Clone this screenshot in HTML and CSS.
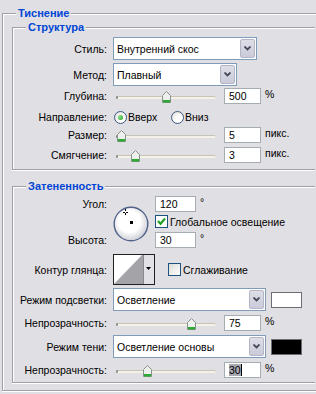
FILE: index.html
```html
<!DOCTYPE html>
<html lang="ru">
<head>
    <meta charset="UTF-8">
    <meta name="viewport" content="width=device-width, initial-scale=1.0">
    <title>Тиснение</title>
    <link rel="stylesheet" href="styles.css">
</head>
<body>
    <div class="group outer">
        <div class="group-title">Тиснение</div>

        <!-- Структура -->
        <div class="group inner structure">
            <div class="group-title">Структура</div>

            <div class="row r-style">
                <label>Стиль:</label>
                <div class="select w-style">
                    <span>Внутренний скос</span>
                    <span class="select-btn"><svg width="7" height="5" viewBox="0 0 7 5"><polyline points="0.5,0.5 3.5,3.5 6.5,0.5" fill="none" stroke="#45475a" stroke-width="1.8"/></svg></span>
                </div>
            </div>

            <div class="row r-method">
                <label>Метод:</label>
                <div class="select w-method">
                    <span>Плавный</span>
                    <span class="select-btn"><svg width="7" height="5" viewBox="0 0 7 5"><polyline points="0.5,0.5 3.5,3.5 6.5,0.5" fill="none" stroke="#45475a" stroke-width="1.8"/></svg></span>
                </div>
            </div>

            <div class="row r-depth">
                <label>Глубина:</label>
                <div class="slider">
                    <div class="track"></div>
                    <span class="thumb" style="left: 46px"><svg width="9" height="12" viewBox="0 0 9 12"><path d="M0.5 4.5 4.5 0.5 8.5 4.5V11.5H0.5Z" fill="#eef0ee" stroke="#87938a"/><rect x="1" y="9" width="7" height="2.5" fill="#2eaa34"/></svg></span>
                </div>
                <div class="field">500</div>
                <span class="unit">%</span>
            </div>

            <div class="row r-dir">
                <label>Направление:</label>
                <div class="option first-opt"><span class="radio on"></span>Вверх</div>
                <div class="option"><span class="radio"></span>Вниз</div>
            </div>

            <div class="row r-size">
                <label>Размер:</label>
                <div class="slider">
                    <div class="track"></div>
                    <span class="thumb" style="left: 1px"><svg width="9" height="12" viewBox="0 0 9 12"><path d="M0.5 4.5 4.5 0.5 8.5 4.5V11.5H0.5Z" fill="#eef0ee" stroke="#87938a"/><rect x="1" y="9" width="7" height="2.5" fill="#2eaa34"/></svg></span>
                </div>
                <div class="field">5</div>
                <span class="unit">пикс.</span>
            </div>

            <div class="row r-soft">
                <label>Смягчение:</label>
                <div class="slider">
                    <div class="track"></div>
                    <span class="thumb" style="left: 15px"><svg width="9" height="12" viewBox="0 0 9 12"><path d="M0.5 4.5 4.5 0.5 8.5 4.5V11.5H0.5Z" fill="#eef0ee" stroke="#87938a"/><rect x="1" y="9" width="7" height="2.5" fill="#2eaa34"/></svg></span>
                </div>
                <div class="field">3</div>
                <span class="unit">пикс.</span>
            </div>
        </div>

        <!-- Затененность -->
        <div class="group inner shade">
            <div class="group-title">Затененность</div>

            <div class="angle-block">
                <div class="angle-labels">
                    <label>Угол:</label>
                    <label>Высота:</label>
                </div>
                <div class="dial">
                    <svg width="36" height="36" viewBox="0 0 36 36">
                        <defs>
                            <radialGradient id="dialFill" cx="45%" cy="42%" r="58%">
                                <stop offset="0.55" stop-color="#ffffff"/>
                                <stop offset="1" stop-color="#cfd0d6"/>
                            </radialGradient>
                        </defs>
                        <circle cx="18" cy="18" r="16.8" fill="url(#dialFill)" stroke="#51638a" stroke-width="1.4"/>
                        <rect x="12" y="3" width="1" height="2" fill="#000"/>
                        <rect x="12" y="7" width="1" height="2" fill="#000"/>
                        <rect x="10" y="6" width="2" height="1" fill="#000"/>
                        <rect x="13" y="6" width="2" height="1" fill="#000"/>
                        <rect x="17" y="15" width="3" height="3" fill="#000"/>
                    </svg>
                </div>
                <div class="angle-fields">
                    <div class="field-line">
                        <div class="field wide">120</div>
                        <span class="unit">°</span>
                    </div>
                    <div class="check-line">
                        <span class="check on"><svg width="11" height="11" viewBox="0 0 11 11"><polyline points="2,5 4.5,7.8 9,2.5" fill="none" stroke="#21a121" stroke-width="2.2"/></svg></span>
                        <span>Глобальное освещение</span>
                    </div>
                    <div class="field-line">
                        <div class="field wide">30</div>
                        <span class="unit">°</span>
                    </div>
                </div>
            </div>

            <div class="row r-contour">
                <label>Контур глянца:</label>
                <div class="contour">
                    <svg width="42" height="31" viewBox="0 0 42 31">
                        <rect x="0.5" y="0.5" width="41" height="30" fill="#e2e1e5" stroke="#202020"/>
                        <rect x="1" y="1" width="29" height="29" fill="#ffffff"/>
                        <polygon points="1,30 29,1 30,1 30,30" fill="#a3a3a8"/>
                        <rect x="30" y="1" width="1" height="29" fill="#8a8a8e"/>
                        <polygon points="33,13 38,13 35.5,16" fill="#000"/>
                    </svg>
                </div>
                <span class="check"></span>
                <span class="check-text">Сглаживание</span>
            </div>

            <div class="row r-light">
                <label>Режим подсветки:</label>
                <div class="select w-mode">
                    <span>Осветление</span>
                    <span class="select-btn"><svg width="7" height="5" viewBox="0 0 7 5"><polyline points="0.5,0.5 3.5,3.5 6.5,0.5" fill="none" stroke="#45475a" stroke-width="1.8"/></svg></span>
                </div>
                <span class="swatch white"></span>
            </div>

            <div class="row r-op1">
                <label>Непрозрачность:</label>
                <div class="slider">
                    <div class="track"></div>
                    <span class="thumb" style="left: 71px"><svg width="9" height="12" viewBox="0 0 9 12"><path d="M0.5 4.5 4.5 0.5 8.5 4.5V11.5H0.5Z" fill="#eef0ee" stroke="#87938a"/><rect x="1" y="9" width="7" height="2.5" fill="#2eaa34"/></svg></span>
                </div>
                <div class="field">75</div>
                <span class="unit">%</span>
            </div>

            <div class="row r-shadow">
                <label>Режим тени:</label>
                <div class="select w-mode">
                    <span>Осветление основы</span>
                    <span class="select-btn"><svg width="7" height="5" viewBox="0 0 7 5"><polyline points="0.5,0.5 3.5,3.5 6.5,0.5" fill="none" stroke="#45475a" stroke-width="1.8"/></svg></span>
                </div>
                <span class="swatch black"></span>
            </div>

            <div class="row r-op2">
                <label>Непрозрачность:</label>
                <div class="slider">
                    <div class="track"></div>
                    <span class="thumb" style="left: 27px"><svg width="9" height="12" viewBox="0 0 9 12"><path d="M0.5 4.5 4.5 0.5 8.5 4.5V11.5H0.5Z" fill="#eef0ee" stroke="#87938a"/><rect x="1" y="9" width="7" height="2.5" fill="#2eaa34"/></svg></span>
                </div>
                <div class="field"><span class="sel">30</span><span class="caret"></span></div>
                <span class="unit">%</span>
            </div>
        </div>
    </div>
</body>
</html>
```

FILE: styles.css
```css
* {
    margin: 0;
    padding: 0;
    box-sizing: border-box;
}

html,
body {
    background: #e0dfe3;
}

body {
    width: 316px;
    height: 394px;
    overflow: hidden;
    font-family: 'Liberation Sans', Arial, sans-serif;
    font-size: 10.5px;
    color: #000;
}

/* group boxes: right edges run off the window, so no right border */

.group {
    border: 1px solid #a0a0a4;
    border-right: none;
    box-shadow: inset 1px 1px 0 #fff, 0 1px 0 #fff;
}

.outer {
    width: 314px;
    margin: 13px 0 0 2px;
    padding-bottom: 7px;
}

.inner {
    width: 303px;
    margin: 7px 0 0 9px;
}

.structure {
    padding-bottom: 6px;
}

.shade {
    margin-top: 16px;
    padding-bottom: 4px;
}

.group-title {
    width: fit-content;
    margin: -7px 0 0 13px;
    padding: 0 2px;
    line-height: 13px;
    font-size: 11px;
    font-weight: bold;
    color: #0046d5;
    background: #e0dfe3;
}

/* rows */

.row {
    display: flex;
    align-items: center;
}

.row > label,
.angle-labels label {
    width: 94px;
    margin-right: 6px;
    text-align: right;
    white-space: nowrap;
}

.r-style { margin-top: 3px; height: 23px; }
.r-method { margin-top: 3px; height: 23px; }
.r-depth { margin-top: 2px; height: 16px; }
.r-dir { margin-top: 5px; height: 16px; }
.r-size { margin-top: 2px; height: 16px; }
.r-soft { margin-top: 4px; height: 16px; }

.r-contour { margin-top: 6px; height: 31px; }
.r-light { margin-top: 3px; height: 23px; }
.r-op1 { margin-top: 4px; height: 16px; }
.r-shadow { margin-top: 4px; height: 23px; }
.r-op2 { margin-top: 4px; height: 16px; }

/* combo boxes */

.select {
    display: flex;
    align-items: center;
    height: 23px;
    padding: 1px 1px 1px 3px;
    border: 1px solid #7f9db9;
    background: #fff;
    white-space: nowrap;
}

.w-style { width: 144px; }
.w-method { width: 124px; }
.w-mode { width: 153px; }

.select-btn {
    display: flex;
    align-items: center;
    justify-content: center;
    width: 15px;
    height: 100%;
    margin-left: auto;
    border: 1px solid #b4b6c8;
    border-radius: 2px;
    background: linear-gradient(#dedee8, #cacbd9);
}

/* sliders */

.slider {
    position: relative;
    width: 100px;
    height: 16px;
    margin: 0 8px 0 3px;
}

.track {
    position: relative;
    margin-top: 8px;
    height: 3px;
    border-radius: 2px;
    background: #f4f2e6;
    box-shadow: inset 0 1px 0 #c6c4b8;
}

.track::before {
    content: '';
    position: absolute;
    left: 0;
    top: 0;
    width: 2px;
    height: 3px;
    background: #8c8c88;
    border-radius: 1px;
}

.thumb {
    position: absolute;
    top: 3px;
    line-height: 0;
}

/* text fields */

.field {
    display: flex;
    align-items: center;
    width: 37px;
    height: 16px;
    padding-left: 4px;
    border: 1px solid #a5acb2;
    background: #fff;
}

.field.wide {
    width: 41px;
}

.unit {
    align-self: flex-start;
    margin-left: 4px;
    line-height: 13px;
}

.sel {
    background: #a8a8b0;
    line-height: 12px;
}

.caret {
    width: 1px;
    height: 12px;
    background: #000;
}

/* radio buttons */

.option {
    display: flex;
    align-items: center;
}

.first-opt {
    width: 57px;
    margin-left: 1px;
}

.radio {
    position: relative;
    width: 13px;
    height: 13px;
    margin-right: 1px;
    border: 1px solid #3d5a86;
    border-radius: 50%;
    background: radial-gradient(circle at 65% 65%, #fff 30%, #d9d8d2);
}

.radio.on::after {
    content: '';
    position: absolute;
    left: 3px;
    top: 3px;
    width: 5px;
    height: 5px;
    border-radius: 50%;
    background: radial-gradient(circle at 35% 35%, #8be08b, #21a121);
}

/* check boxes */

.check {
    display: flex;
    align-items: center;
    justify-content: center;
    width: 13px;
    height: 13px;
    border: 1px solid #1c5180;
    background: linear-gradient(135deg, #dcdcd6, #fff);
}

.check.on {
    background: #fff;
}

/* angle block */

.angle-block {
    display: flex;
    margin-top: 3px;
}

.angle-labels {
    display: flex;
    flex-direction: column;
    justify-content: space-between;
    height: 52px;
}

.angle-labels label {
    line-height: 16px;
}

.dial {
    width: 36px;
    height: 36px;
    margin: 10px 6px 0 0;
}

.field-line {
    display: flex;
}

.check-line {
    display: flex;
    align-items: center;
    margin: 3px 0 4px;
    height: 13px;
}

.check-line .check {
    margin-right: 2px;
}

/* contour */

.contour {
    width: 42px;
    height: 31px;
    margin-right: 13px;
    line-height: 0;
}

.check-text {
    margin-left: 2px;
}

/* colour swatches */

.swatch {
    width: 31px;
    height: 16px;
    margin-left: 5px;
    border: 1px solid #6e6e72;
}

.swatch.white { background: #fff; }
.swatch.black { background: #000; }
```
